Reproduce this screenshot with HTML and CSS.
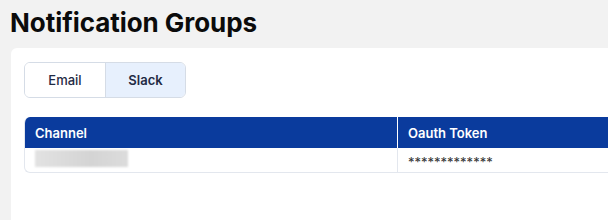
FILE: index.html
```html
<!DOCTYPE html>
<html>
<head>
<meta charset="utf-8">
<link rel="stylesheet" href="styles.css">
</head>
<body>
<h1 class="title">Notification Groups</h1>
<div class="panel">
  <div class="toggle">
    <button class="tab">Email</button>
    <button class="tab active">Slack</button>
  </div>
  <div class="table">
    <div class="row head">
      <div class="cell c1">Channel</div>
      <div class="cell c2">Oauth Token</div>
    </div>
    <div class="row body">
      <div class="cell c1"><span class="blur"></span></div>
      <div class="cell c2">*************</div>
    </div>
  </div>
</div>
</body>
</html>
```

FILE: styles.css
```css
html, body {
  margin: 0;
  padding: 0;
  background: #f2f2f2;
  font-family: Inter, "Liberation Sans", sans-serif;
  overflow: hidden;
  height: 220px;
}
.title {
  margin: 0;
  padding: 5px 0 0 10px;
  height: 48px;
  box-sizing: border-box;
  font-size: 26px;
  font-weight: 700;
  line-height: 36px;
  color: #0b0b0b;
  letter-spacing: -0.05px;
}
.panel {
  margin-left: 11px;
  background: #fff;
  border-top-left-radius: 6px;
  padding: 14px 0 0 13px;
  height: 172px;
  box-sizing: border-box;
}
.toggle {
  display: inline-flex;
  border: 1px solid #d5dce6;
  border-radius: 6px;
  overflow: hidden;
  height: 36px;
  box-sizing: border-box;
}
.tab {
  width: 80px;
  box-sizing: border-box;
  border: 0;
  background: #fff;
  font-family: inherit;
  font-size: 13px;
  font-weight: 500;
  color: #1f2a44;
  padding: 0;
}
.tab.active {
  background: #e7f0fd;
  border-left: 1px solid #d5dce6;
  font-weight: 600;
}
.table {
  margin-top: 19px;
  border: 1px solid #e3e7ee;
  border-right: 0;
  border-top: 0;
  border-radius: 6px 0 0 6px;
  overflow: hidden;
}
.row {
  display: grid;
  grid-template-columns: 372px 1fr;
}
.head {
  background: #0a3b9d;
  color: #fff;
  font-weight: 600;
  font-size: 13px;
  height: 31px;
  align-items: center;
}
.head .c2 {
  border-left: 1px solid #fff;
  height: 31px;
  display: flex;
  align-items: center;
}
.head .c1 { padding-left: 10px; }
.cell.c2 { padding-left: 10px; box-sizing: border-box; }
.body {
  height: 24px;
  font-size: 13px;
  color: #333;
}
.body .c1 { padding: 2px 0 0 10px; }
.body .c2 {
  border-left: 1px solid #e3e7ee;
  display: flex;
  align-items: center;
  padding-top: 3px;
}
.blur {
  display: block;
  width: 93px;
  height: 17px;
  background: linear-gradient(90deg, #e2e2e2, #d4d4d4 60%, #dcdcdc);
  filter: blur(1px);
}
```
